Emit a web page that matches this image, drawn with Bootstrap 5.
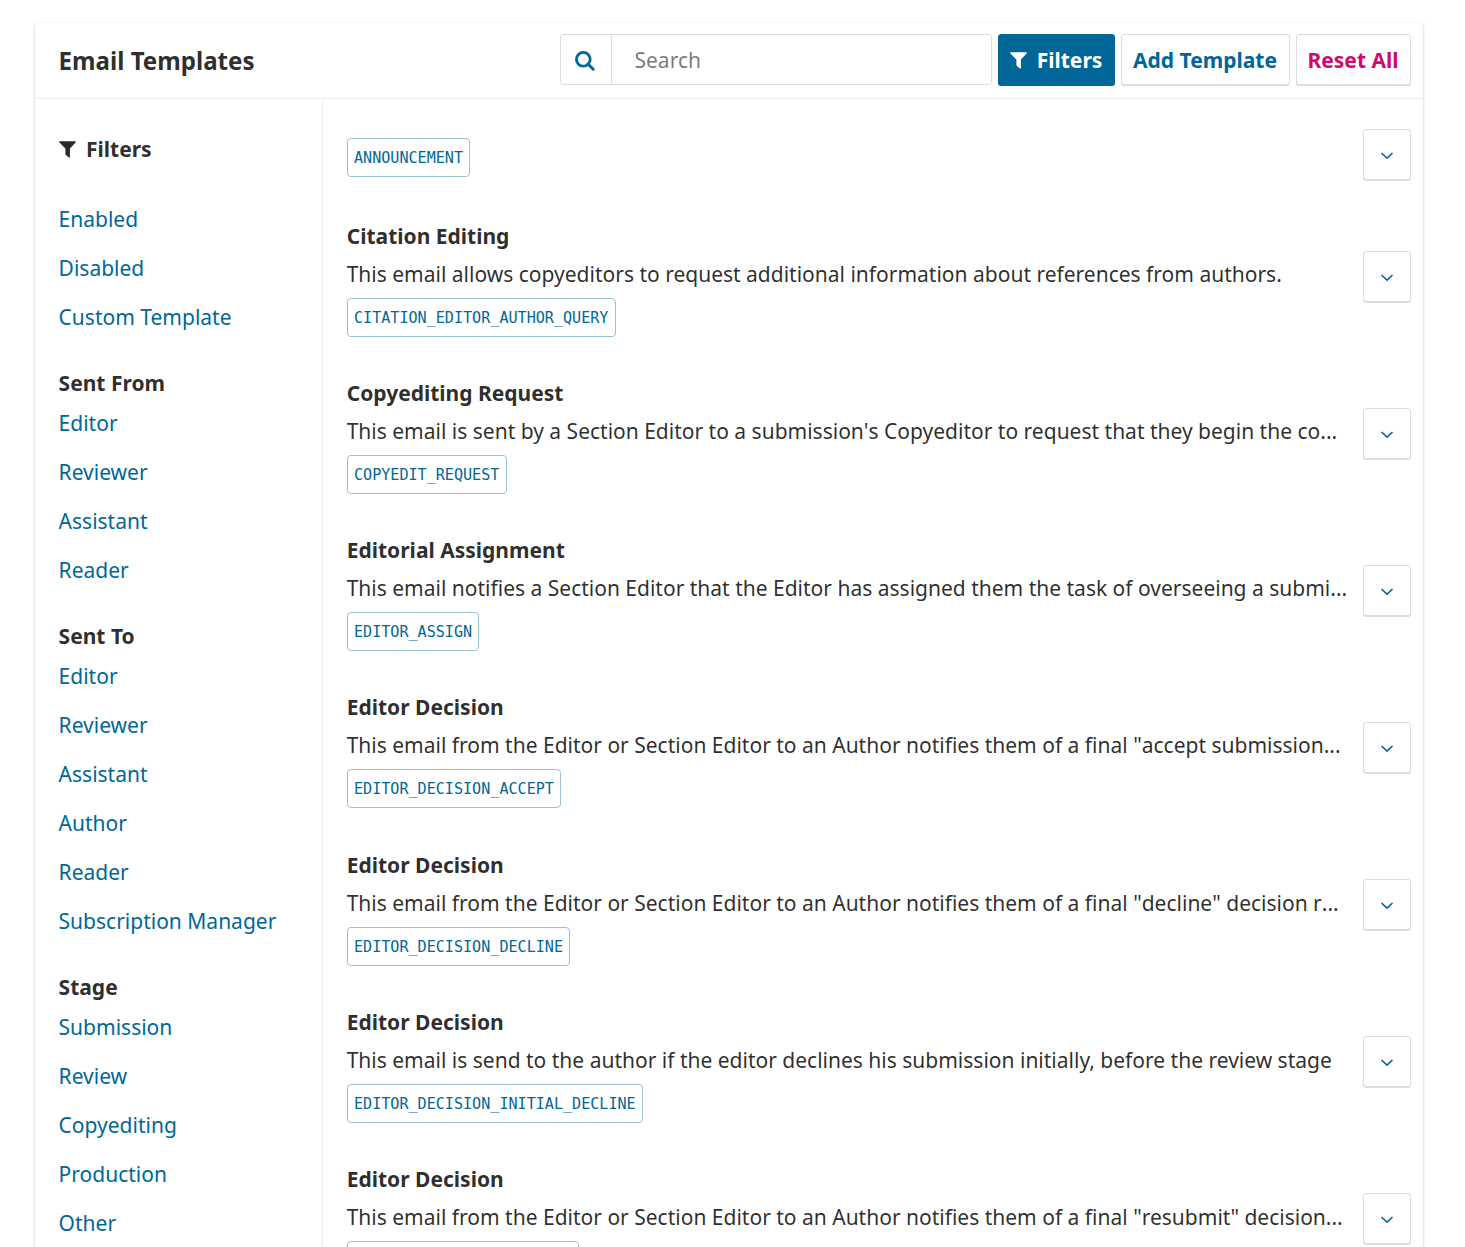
<!DOCTYPE html>
<html lang="en">
<head>
<meta charset="utf-8">
<title>Email Templates</title>
<link href="https://cdn.jsdelivr.net/npm/bootstrap@5.3.0/dist/css/bootstrap.min.css" rel="stylesheet">
<style>
body{font-family:"Noto Sans",sans-serif;font-size:21px;color:rgba(0,0,0,.84);background:#fff;height:1247px;overflow:hidden}
.panel{margin:23px 42px 0 35px;height:1224px;border-radius:4px 4px 0 0;box-shadow:0 1px 3px rgba(0,0,0,.25)}
.panel-top{height:76px;padding:11px 12px 0 23.600px;border-bottom:1px solid #eaedee}
.panel-title{font-size:24.1px;font-weight:700;line-height:54px;margin:0}
.search-box{width:432px;height:51px;border:1px solid #ddd;border-radius:3px;overflow:hidden}
.search-icon{width:51px;border-right:1px solid #ddd;padding-right:2px;padding-top:3px}
.search-box input{border:0;padding:2px 22.500px 0;font-size:21px;line-height:47px;outline:0;min-width:0}
.search-box input::placeholder{color:rgba(0,0,0,.54);opacity:1}
.pbtn{height:51px;border:1px solid #ddd;border-radius:3px;box-shadow:0 1px 0 #ddd;color:#006798;background:#fff;font-size:21px;font-weight:700;line-height:50px;padding:0 1px 0 0;white-space:nowrap}
.pbtn.active-filter{background:#006798;border-color:#006798;box-shadow:0 1px 0 #006798;color:#fff;width:117px}
.active-filter svg{margin-right:10px;margin-top:2px}
.pbtn.add{width:169px}.pbtn.reset{width:115px;color:#d00a6c}
.side{width:288px;border-right:1px solid #eaedee;padding:34.8px 0 0 23.600px}
.side-head{font-size:21px;font-weight:700;line-height:31px;height:31px;margin:26px 0 0}
.side-head.first{margin:0 0 30px}
.side-head svg{margin-right:10.400px;margin-top:1px}
.side a{display:block;height:49.03px;line-height:49px;color:#006798;text-decoration:none;white-space:nowrap}
.list{padding:30px 12px 0 23.700px;min-width:0;height:1148px;overflow:hidden}
.entry{padding-bottom:37.1px}
.entry:first-child{padding-bottom:37.2px}
.entry h3{font-size:21px;font-weight:700;line-height:38px;margin:0}
.entry p{line-height:38px;margin:0}
.entry i{font-style:normal;font-kerning:none}
.key{display:block;width:fit-content;height:39px;line-height:39px;margin-top:5px;padding:0 6.300px;border:1px solid #99c2d6;border-radius:4px;color:#006798;font-family:"DejaVu Sans Mono",monospace;font-size:15.1px}
.toggle{width:48px;margin-left:16px}
.entry+.entry .toggle{margin-bottom:2px}
.toggle svg{margin-top:3px}
</style>
</head>
<body>
<div class="panel">
<header class="panel-top d-flex align-items-start justify-content-between">
<h1 class="panel-title">Email Templates</h1>
<div class="d-flex" style="gap:6px">
<label class="search-box d-flex"><span class="search-icon d-flex flex-shrink-0 align-items-center justify-content-center"><svg width="20" height="20" viewBox="0 0 20 20" fill="none" stroke="#006798"><circle cx="8.3" cy="8.3" r="6.9" stroke-width="2.8"/><path d="M13 13l5.200 5.200" stroke-width="3" stroke-linecap="round"/></svg></span><input class="flex-grow-1" type="search" placeholder="Search"></label>
<button class="pbtn active-filter d-flex align-items-center justify-content-center"><svg width="17" height="17" viewBox="0 0 17 17" fill="currentColor"><path d="M.4.300H16.600L16.800 1.300 10.900 7.400V16.300L10.200 16.700 6.400 13.400V7.400L.2 1.300z"/></svg><span>Filters</span></button>
<button class="pbtn add">Add Template</button>
<button class="pbtn reset">Reset All</button>
</div>
</header>
<div class="d-flex">
<nav class="side flex-shrink-0">
<h2 class="side-head first d-flex align-items-center"><svg width="17" height="17" viewBox="0 0 17 17" fill="currentColor"><path d="M.4.300H16.600L16.800 1.300 10.900 7.400V16.300L10.200 16.700 6.400 13.400V7.400L.2 1.300z"/></svg><span>Filters</span></h2>
<a href="#">Enabled</a><a href="#">Disabled</a><a href="#">Custom Template</a>
<h2 class="side-head">Sent From</h2>
<a href="#">Editor</a><a href="#">Reviewer</a><a href="#">Assistant</a><a href="#">Reader</a>
<h2 class="side-head">Sent To</h2>
<a href="#">Editor</a><a href="#">Reviewer</a><a href="#">Assistant</a><a href="#">Author</a><a href="#">Reader</a><a href="#">Subscription Manager</a>
<h2 class="side-head">Stage</h2>
<a href="#">Submission</a><a href="#">Review</a><a href="#">Copyediting</a><a href="#">Production</a><a href="#">Other</a>
</nav>
<main class="list flex-grow-1" id="list"></main>
</div>
</div>
<script>
const chevron='<svg width="14" height="10" viewBox="0 0 14 10" fill="none" stroke="currentColor" stroke-width="1.6"><path d="M1.500 2L7 7.200 12.500 2"/></svg>';
const rows=[
["","","ANNOUNCEMENT"],
["Citation Editing","This email allows copyeditors to request additional information about references from authors.","CITATION_EDITOR_AUTHOR_QUERY"],
["Copyediting Request","This email is sent by a Section Editor to a submission's Copyeditor to request that they begin the co...","COPYEDIT_REQUEST"],
["Editorial Assignment","This email notifies a Section Editor that the Editor has assigned them the task of overseeing a submi...","EDITOR_ASSIGN"],
["Editor Decision","This email from the Editor or Section Editor to an Author notifies them of a final \"accept submission...","EDITOR_DECISION_ACCEPT"],
["Editor Decision","This email from the Editor or Section Editor to an Author notifies them of a final \"decline\" decision r...","EDITOR_DECISION_DECLINE"],
["Editor Decision","This email is send to the author if the editor declines his submission initially, before the review stage","EDITOR_DECISION_INITIAL_DECLINE"],
["Editor Decision","This email from the Editor or Section Editor to an Author notifies them of a final \"resubmit\" decision...",""]];
// Quotes and trailing dots keep their full advance width
const loose=s=>s.replace(/["']|\.\.\.$/g,m=>`<i>${m}</i>`);
document.getElementById("list").innerHTML=rows.map(([t,d,k])=>`<div class="entry d-flex align-items-center"><div class="flex-grow-1 text-nowrap" style="min-width:0">${t?`<h3>${t}</h3><p>${loose(d)}</p>`:""}<span class="key"${k?"":' style="width:232px"'}>${k}</span></div><button class="pbtn toggle flex-shrink-0 d-flex align-items-center justify-content-center" aria-label="Expand">${chevron}</button></div>`).join("");
</script>
<script src="https://cdn.jsdelivr.net/npm/bootstrap@5.3.0/dist/js/bootstrap.bundle.min.js"></script>
</body>
</html>
